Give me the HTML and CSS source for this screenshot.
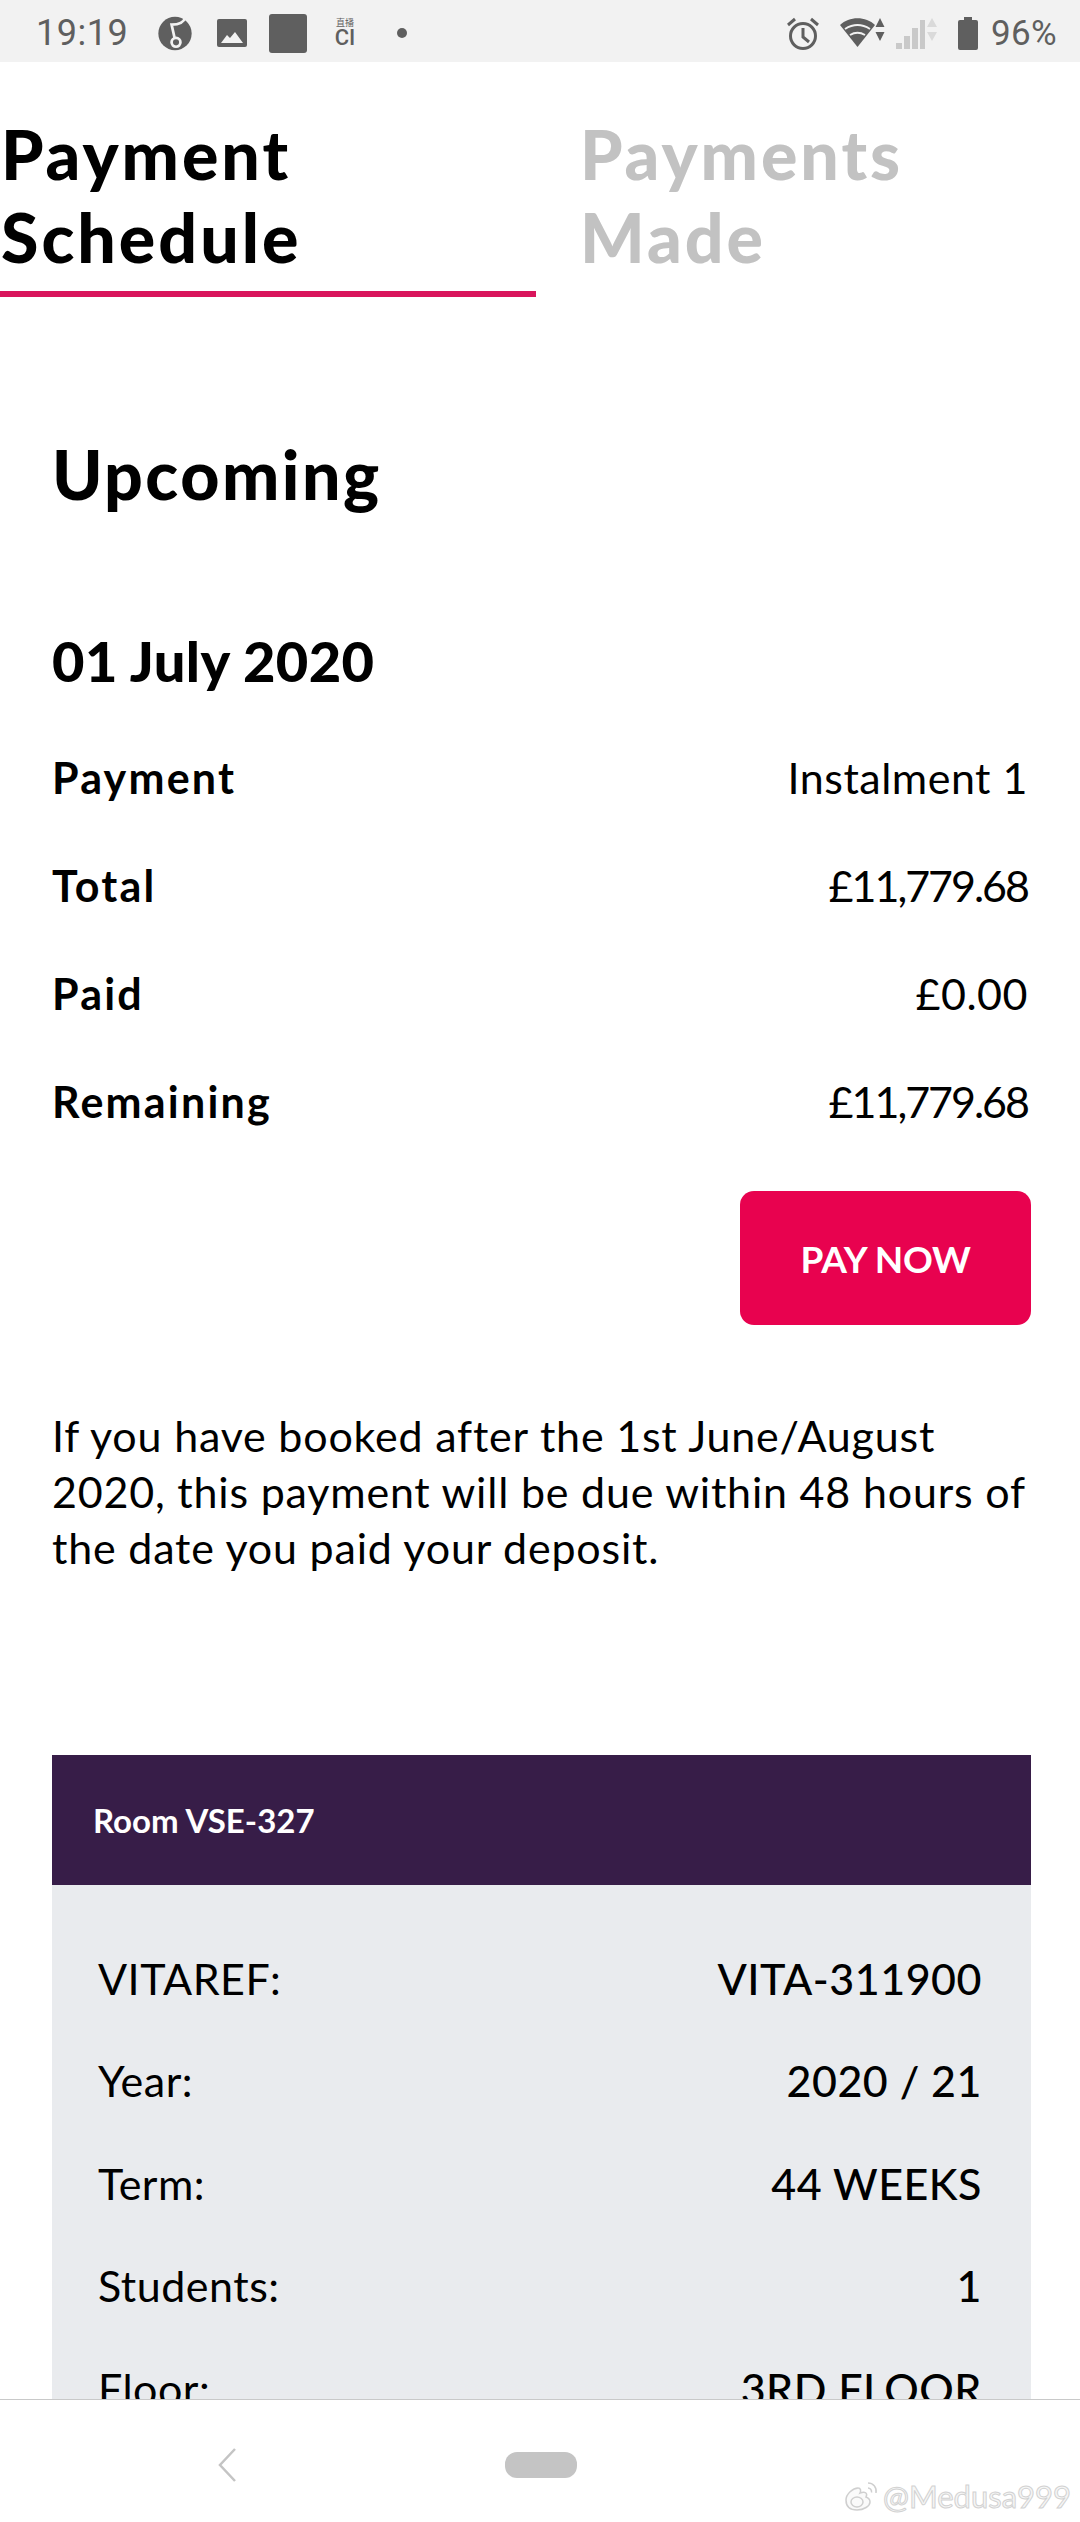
FILE: index.html
```html
<!DOCTYPE html>
<html lang="en">
<head>
<meta charset="utf-8">
<title>Payment Schedule</title>
<link rel="stylesheet" href="styles.css">
</head>
<body>
<div class="screen">
  <header class="statusbar">
    <div class="status-left">
      <span class="clock">19:19</span>
      <svg class="ic-note" width="34" height="35" viewBox="0 0 100 100"><circle cx="50" cy="50" r="49" fill="#5f5f5f"/><path d="M80 3C76 18 62 24 40 24l9 40" fill="none" stroke="#f2f2f2" stroke-width="8"/><circle cx="53" cy="76" r="13" fill="none" stroke="#f2f2f2" stroke-width="8"/></svg>
      <svg class="ic-image" width="30" height="28" viewBox="0 0 30 28"><rect width="30" height="28" rx="2" fill="#5f5f5f"/><path d="M4 24l6-8 3 3 5-6 8 11z" fill="#f2f2f2"/></svg>
      <span class="square"></span>
      <span class="ci"><small>直播</small><b>CI</b></span>
      <span class="dot"></span>
    </div>
    <div class="status-right">
      <svg class="ic-alarm" width="34" height="33" viewBox="0 0 34 33" fill="none" stroke="#5f5f5f" stroke-width="3"><circle cx="17" cy="19" r="12.5"/><path d="M17 11v9l6 5M2 8l7-6M32 8l-7-6"/></svg>
      <svg class="ic-wifi" width="45" height="30" viewBox="0 0 45 30"><path d="M0 7C9-2 26-2 35 7L17.500 29z" fill="#5f5f5f"/><path d="M5 11c8-5 17-5 25 0M10 17c5-3 10-3 15 0" stroke="#f2f2f2" stroke-width="2" fill="none"/><path d="M40 0l4.500 9h-9zM40 23l4.500-9h-9z" fill="#5f5f5f"/></svg>
      <svg class="ic-signal" width="43" height="31" viewBox="0 0 43 31"><path d="M1 25h6v6H1zM9 18h6v13H9zM17 10h6v21h-6zM25 2h5v29h-5z" fill="#c9c9c9"/><path d="M37 0l5 9H32zM37 23l5-9H32z" fill="#dadada"/></svg>
      <svg class="ic-battery" width="20" height="33" viewBox="0 0 20 33"><path d="M6 0h8v3h4a2 2 0 0 1 2 2v26a2 2 0 0 1-2 2H2a2 2 0 0 1-2-2V5a2 2 0 0 1 2-2h4z" fill="#5f5f5f"/></svg>
      <span class="battery">96%</span>
    </div>
  </header>

  <main class="content">
    <nav class="tabs">
      <div class="tab tab-active">Payment<br>Schedule</div>
      <div class="tab tab-muted">Payments<br>Made</div>
    </nav>

    <section class="upcoming">
      <h1 class="heading">Upcoming</h1>
      <h2 class="date">01 July 2020</h2>
      <dl class="summary">
        <div class="row"><dt>Payment</dt><dd>Instalment 1</dd></div>
        <div class="row"><dt>Total</dt><dd class="amount">£11,779.68</dd></div>
        <div class="row"><dt>Paid</dt><dd>£0.00</dd></div>
        <div class="row"><dt>Remaining</dt><dd class="amount">£11,779.68</dd></div>
      </dl>
      <div class="actions"><button class="pay">PAY NOW</button></div>
      <p class="note">If you have booked after the 1st June/August 2020, this payment will be due within 48 hours of the date you paid your deposit.</p>
    </section>

    <section class="room">
      <div class="room-head">Room VSE-327</div>
      <dl class="room-body">
        <div class="row"><dt>VITAREF:</dt><dd>VITA-311900</dd></div>
        <div class="row"><dt>Year:</dt><dd>2020 / 21</dd></div>
        <div class="row"><dt>Term:</dt><dd>44 WEEKS</dd></div>
        <div class="row"><dt>Students:</dt><dd>1</dd></div>
        <div class="row"><dt>Floor:</dt><dd>3RD FLOOR</dd></div>
      </dl>
    </section>
  </main>

  <footer class="navbar">
    <svg width="20" height="34" viewBox="0 0 20 34" fill="none" stroke="#c4c4c4" stroke-width="2.500"><path d="M18 1L3 17l15 16"/></svg>
    <span class="home"></span>
    <div class="watermark">
      <svg width="36" height="32" viewBox="0 0 36 32" fill="#fafafa" stroke="#cfcfcf" stroke-width="1.500"><path d="M3 20c0-6 7-12 12-12 3 0 3 3 2 5 5-2 8 0 6 4 3 1 4 3 4 5 0 4-6 8-13 8S3 27 3 20z"/><ellipse cx="14" cy="22" rx="6" ry="5"/><path d="M25 3c5 0 9 4 8 10M25 8c2 0 4 2 3.500 4.500" fill="none"/></svg>
      <span>@Medusa999</span>
    </div>
  </footer>
</div>
</body>
</html>
```
FILE: styles.css
```css
* { box-sizing: border-box; margin: 0; padding: 0; }
html, body { width: 1080px; height: 2522px; overflow: hidden; background: #fff; }
body { font-family: Lato, "Liberation Sans", sans-serif; color: #000; }
.screen { width: 1080px; height: 2522px; display: flex; flex-direction: column; }

.statusbar { height: 62px; flex: none; background: #f2f2f2; display: flex; justify-content: space-between; align-items: center; padding: 4px 23px 0 36px; color: #5f5f5f; }
.status-left, .status-right { display: flex; align-items: center; }
.clock { font: 400 36px Roboto, sans-serif; letter-spacing: 0.5px; width: 122px; }
.ic-image { margin-left: 25px; }
.square { width: 38px; height: 39px; background: #5f5f5f; border-radius: 3px; margin-left: 22px; }
.ci { display: flex; flex-direction: column; align-items: center; margin-left: 26px; width: 24px; line-height: 1; }
.ci small { font: 400 9px/10px "Noto Sans CJK SC", sans-serif; }
.ci b { font: 500 22px/20px Roboto, sans-serif; }
.dot { width: 10px; height: 10px; border-radius: 50%; background: #5f5f5f; margin-left: 40px; }
.ic-wifi { margin-left: 20px; }
.ic-signal { margin-left: 10px; }
.ic-battery { margin-left: 20px; }
.battery { font: 400 35px Roboto, sans-serif; margin-left: 13px; letter-spacing: 0.3px; }

.content { flex: 1; min-height: 0; overflow: hidden; }
.tabs { display: flex; padding-top: 50px; }
.tab { font-size: 68px; font-weight: 900; letter-spacing: 3px; line-height: 83px; padding: 0 0 13px 1px; }
.tab-active { width: 536px; border-bottom: 6px solid #d9155c; }
.tab-muted { margin-left: 43px; color: #c2c2c2; border-bottom: 6px solid transparent; }

.upcoming { padding: 0 49px 0 52px; }
.heading { font-size: 68px; font-weight: 900; letter-spacing: 2.500px; line-height: 82px; margin-top: 136px; }
.date { font-size: 56px; font-weight: 900; letter-spacing: 0.400px; line-height: 68px; margin-top: 112px; }
.summary { margin-top: 28px; }
.row { display: flex; justify-content: space-between; align-items: center; }
.summary .row { height: 108px; font-size: 43px; padding-right: 3px; }
.summary dt { font-weight: 700; letter-spacing: 2.200px; }
.summary dd { letter-spacing: 0.500px; }
.summary .amount { letter-spacing: -2px; }
.actions { margin-top: 36px; }
.pay { display: block; margin-left: auto; width: 291px; height: 134px; background: #e8024f; color: #fff; border: 0; border-radius: 14px; font: 700 37px Lato, sans-serif; letter-spacing: -0.300px; }
.note { font-size: 43px; letter-spacing: 0.800px; line-height: 56px; margin: 83px -12px 0 0; }

.room { margin: 179px 49px 0 52px; }
.room-head { height: 130px; background: #371d48; color: #fff; font-size: 33px; font-weight: 700; display: flex; align-items: center; padding-left: 41px; }
.room-body { background: #e9ebee; padding: 42px 49px 40px 46px; }
.room-body .row { height: 102.500px; font-size: 43px; letter-spacing: 0.500px; }
.room-body dd { font-weight: 500; letter-spacing: 0.500px; }

.navbar { position: relative; height: 123px; flex: none; background: #fff; border-top: 1px solid #c9c9c9; display: flex; align-items: center; padding: 8px 0 0 217px; }
.home { width: 72px; height: 26px; border-radius: 12px; background: #c4c4c4; margin-left: 268px; }
.watermark { position: absolute; right: 9px; bottom: 7px; display: flex; align-items: center; gap: 4px; font-size: 31px; color: #f6f6f6; -webkit-text-stroke: 1px #d2d2d2; }
```
